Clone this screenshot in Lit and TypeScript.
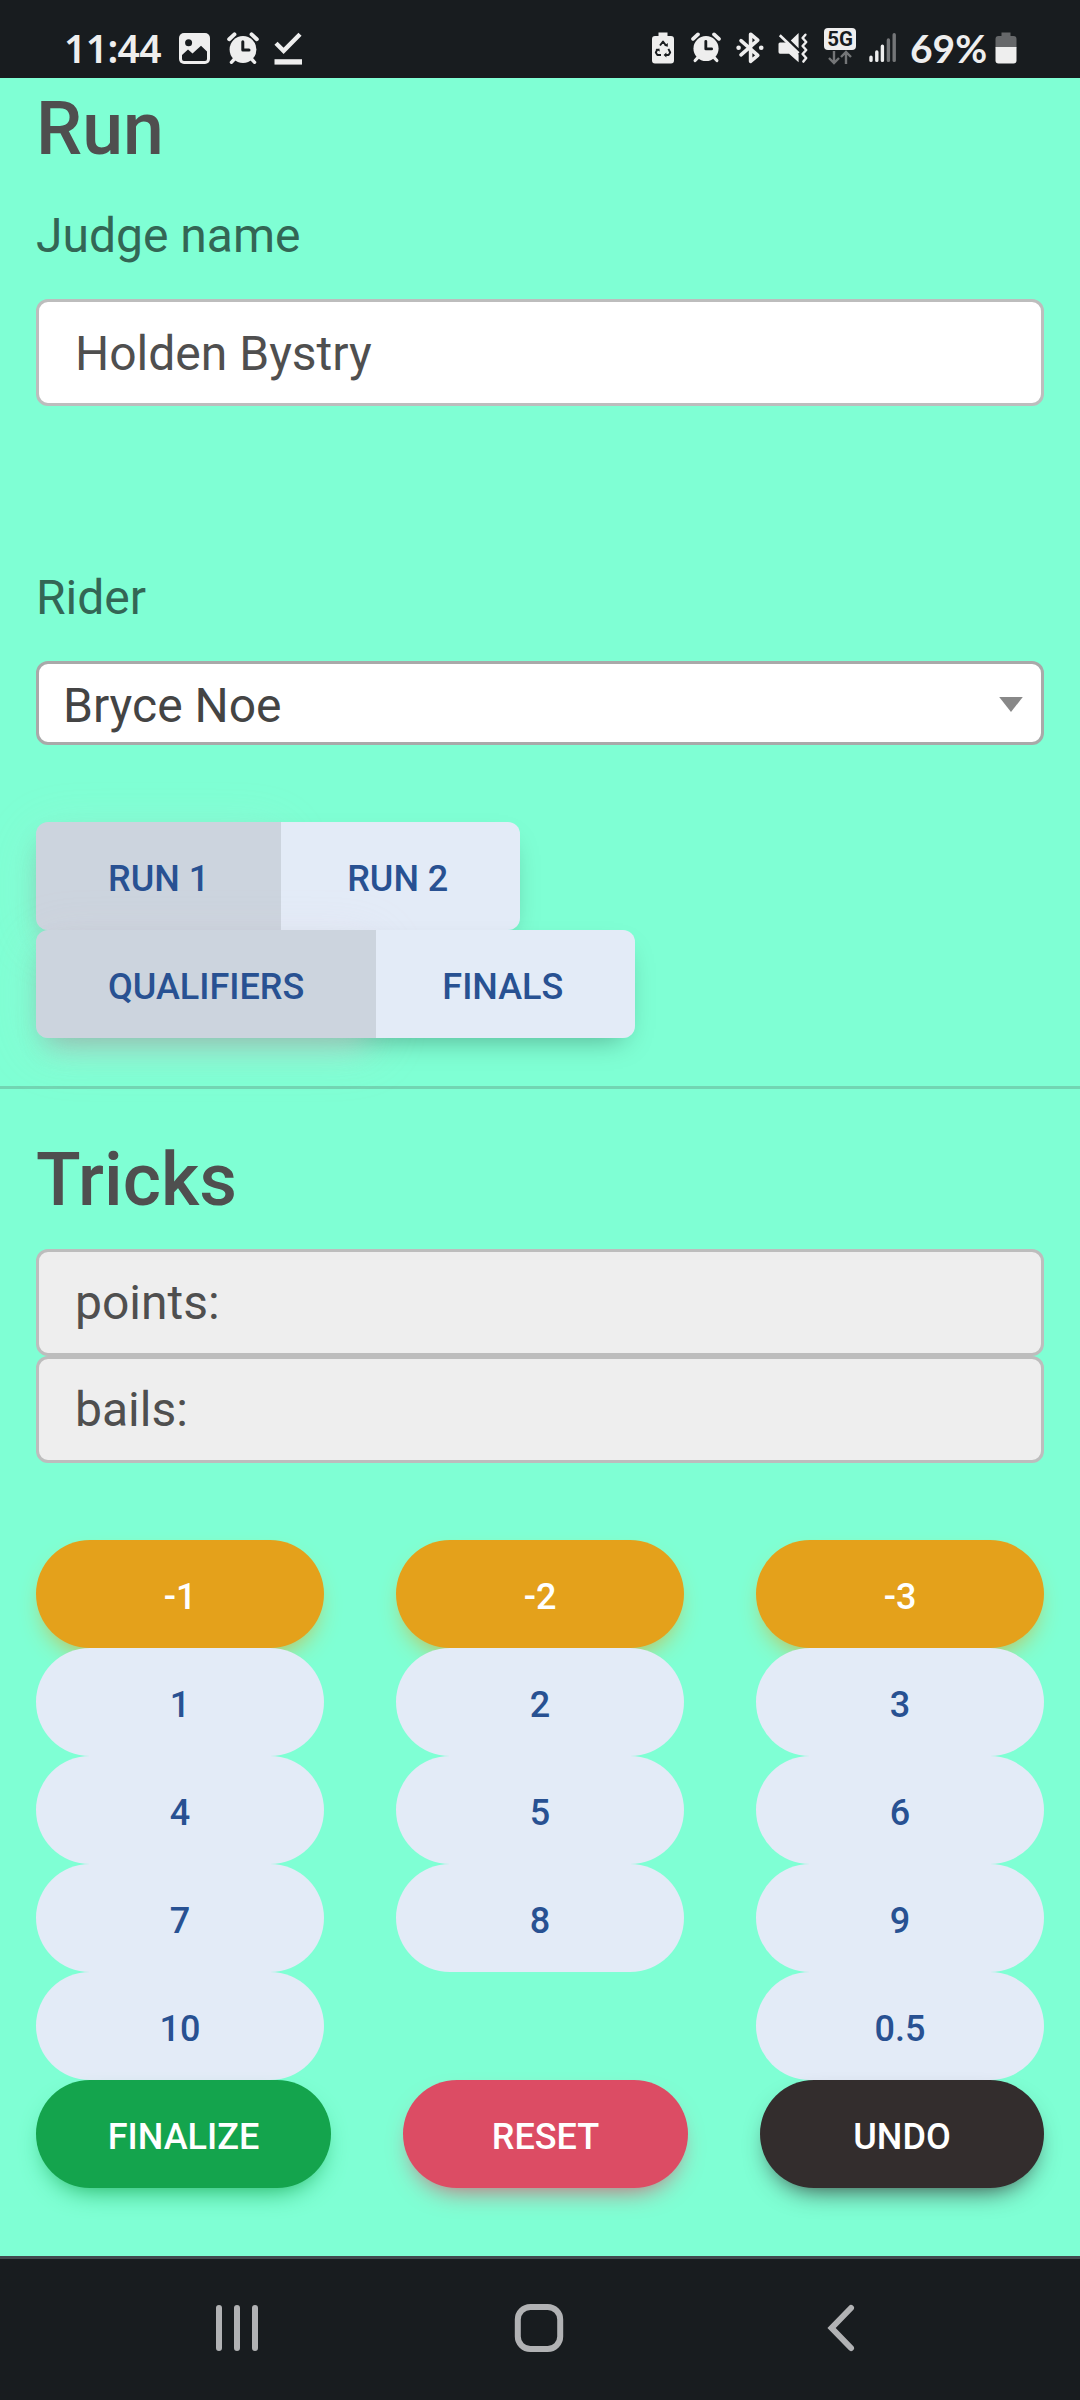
import { LitElement, html, css, svg } from "lit";
import { customElement } from "lit/decorators.js";

const alarmShape = svg`
  <circle cx="16" cy="17.5" r="13.4" fill="#eee"/>
  <path d="M2.2 7.2 7.4 2.4M29.8 7.2 24.6 2.4" stroke="#eee" stroke-width="4" stroke-linecap="round"/>
  <path d="M7 27.5 4.4 30.3M25 27.5 27.6 30.3" stroke="#eee" stroke-width="3.4" stroke-linecap="round"/>
  <path d="M15.8 9.8V17.9H22" fill="none" stroke="#181c1f" stroke-width="3" stroke-linecap="round" stroke-linejoin="round"/>`;

@customElement("status-bar")
class StatusBar extends LitElement {
  static styles = css`
    :host {
      display: flex;
      justify-content: space-between;
      height: 78px;
      padding: 0 63px 0 64px;
      box-sizing: border-box;
      background: #181c1f;
      color: #eee;
      font: 600 39px/54px "Noto Sans", "Open Sans", sans-serif;
    }
    .side {
      display: flex;
      align-items: flex-start;
      padding-top: 21px;
    }
    svg {
      display: block;
      flex: none;
      margin-top: 10px;
    }
    .clock {
      width: 98px;
      letter-spacing: -0.6px;
      white-space: nowrap;
    }
    .percent {
      width: 80px;
      font-family: Lato, sans-serif;
      font-weight: 700;
      margin-left: 12px;
      white-space: nowrap;
    }
    .image { margin-left: 17px; }
    .alarm { margin-left: 17px; }
    .done { margin-left: 15px; }
    .alarm-small { margin-left: 17px; }
    .bluetooth { margin-left: 15px; }
    .mute { margin-left: 14px; }
    .network { margin-left: 15px; margin-top: 7px; }
    .signal { margin-left: 13px; }
    .battery { margin-left: 5px; }
  `;

  render() {
    return html`
      <div class="side">
        <span class="clock">11:44</span>
        <svg class="image" width="31" height="33" viewBox="0 0 31 33">
          <rect y="2" width="31" height="31" rx="5" fill="#eee"/>
          <circle cx="9.6" cy="11.8" r="3.5" fill="#181c1f"/>
          <path d="M3 24 9 18.5 13.5 22.5 22 14.8 28 20.5V28Q28 30 26 30H5Q3 30 3 28Z" fill="#181c1f"/>
        </svg>
        <svg class="alarm" width="32" height="33" viewBox="0 -1 32 33">${alarmShape}</svg>
        <svg class="done" width="29" height="35" viewBox="0 0 29 35">
          <path d="M2 12.2 9.6 19.8 26 3.2" fill="none" stroke="#eee" stroke-width="4.4"/>
          <path d="M0.5 28.2H28V33.6H0.5Z" fill="#eee"/>
        </svg>
      </div>
      <div class="side">
        <svg width="22" height="33" viewBox="0 0 22 33">
          <path d="M6.5 1.5H15.5V5H19Q22 5 22 8V29.5Q22 32.5 19 32.5H3Q0 32.5 0 29.5V8Q0 5 3 5H6.5Z" fill="#eee"/>
          <path d="M8 14.5 11 10.6 14 14.5M16.4 17.8 18.2 21.5 16.6 24H13M9 24H5.4L3.8 21.5 5.6 17.8" fill="none" stroke="#181c1f" stroke-width="1.9" stroke-linejoin="round"/>
          <path d="M14.4 21.6V26.4L11.6 24ZM3.4 18.4 7.4 17.4 7.8 20.6ZM12.2 14.8 15.8 15.8 15.8 12Z" fill="#181c1f"/>
        </svg>
        <svg class="alarm-small" width="30" height="33" viewBox="0 -1.2 32 35.2">${alarmShape}</svg>
        <svg class="bluetooth" width="28" height="33" viewBox="0 0 28 33">
          <path d="M5 9.6 21.8 24.4 14.6 30.3V3.2L21.8 9.2 5 23.8" fill="none" stroke="#eee" stroke-width="3.6" stroke-linejoin="round" stroke-linecap="round"/>
          <circle cx="2.6" cy="16.8" r="2.3" fill="#eee"/>
          <circle cx="25.2" cy="16.8" r="2.3" fill="#eee"/>
        </svg>
        <svg class="mute" width="31" height="33" viewBox="0 0 31 33">
          <path d="M2 11.5H8.8L20.6 23.4V31.2L11 22.8H2Q0.5 22.8 0.5 21V13Q0.5 11.5 2 11.5ZM20.6 2V17.2L12.8 9.6Z" fill="#eee"/>
          <path d="M1.8 4.2 20.6 22.2" stroke="#eee" stroke-width="2.6"/>
          <path d="M27.4 3.8 24.6 7 28.2 11 24.6 15 28.2 19 24.6 23 28.2 27 25.4 30.6" fill="none" stroke="#eee" stroke-width="2.5" stroke-linejoin="round" stroke-linecap="round"/>
        </svg>
        <svg class="network" width="32" height="38" viewBox="0 0 32 38">
          <rect width="32" height="22" rx="4" fill="#eee"/>
          <text x="16" y="18.4" text-anchor="middle" font-family="Roboto, sans-serif" font-weight="700" font-size="20.5" fill="#181c1f">5G</text>
          <path d="M10 23V34M5 30 10 35 15 30M22 36V25M17 29 22 24 27 29" fill="none" stroke="#747678" stroke-width="2.4"/>
        </svg>
        <svg class="signal" width="29" height="33" viewBox="0 0 29 33">
          <path d="M2 26.2V29.4M7.8 21V29.4M13.4 15.2V29.4" stroke="#eee" stroke-width="3.4" stroke-linecap="round"/>
          <path d="M19.4 9V29.4M25.2 3.8V29.4" stroke="#747678" stroke-width="3.4" stroke-linecap="round"/>
        </svg>
        <span class="percent">69%</span>
        <svg class="battery" width="22" height="33" viewBox="0 0 22 33">
          <path d="M6.5 1.5H15.5V5H18.5Q21.5 5 21.5 8V16.5H0.5V8Q0.5 5 3.5 5H6.5Z" fill="#66686a"/>
          <path d="M0.5 16H21.5V29.5Q21.5 32.5 18.5 32.5H3.5Q0.5 32.5 0.5 29.5Z" fill="#eee"/>
        </svg>
      </div>
    `;
  }
}

@customElement("nav-bar")
class NavBar extends LitElement {
  static styles = css`
    :host {
      display: flex;
      height: 144px;
      box-sizing: border-box;
      border-top: 3px solid #414a4e;
      background: #181c1f;
      padding: 43px 0 0 214px;
      align-items: flex-start;
    }
    svg { display: block; }
    .home { margin-left: 253px; }
    .back { margin-left: 261px; }
  `;

  render() {
    return html`
      <svg width="46" height="52" viewBox="0 0 46 52" stroke="#b1b2b4" stroke-width="6" stroke-linecap="round">
        <path d="M5 6V46M23 6V46M41 6V46"/>
      </svg>
      <svg class="home" width="52" height="52" viewBox="0 0 52 52">
        <rect x="4.8" y="5" width="42.4" height="42" rx="12.5" fill="none" stroke="#b1b2b4" stroke-width="6"/>
      </svg>
      <svg class="back" width="30" height="52" viewBox="0 0 30 52">
        <path d="M25 6 5.6 26 25 46" fill="none" stroke="#b1b2b4" stroke-width="6" stroke-linecap="round"/>
      </svg>
    `;
  }
}

@customElement("app-root")
class AppRoot extends LitElement {
  static styles = css`
    :host {
      display: flex;
      flex-direction: column;
      width: 1080px;
      height: 2400px;
      background: #7fffd4;
      color: #4f4f4f;
      font: 400 48px/72px Roboto, sans-serif;
      overflow: hidden;
    }
    .content {
      flex: 1;
      padding-top: 6px;
    }
    .section {
      display: flex;
      flex-direction: column;
      padding: 0 36px;
    }
    h2 {
      margin: 0;
      font-size: 73.3px;
      line-height: 90px;
      font-weight: 500;
    }
    .label {
      color: #336655;
      margin: 26px 0 27px;
    }
    .rider { margin-top: 156px; }
    .field {
      display: flex;
      align-items: center;
      height: 107px;
      box-sizing: border-box;
      border: 3px solid #bdbdbd;
      border-radius: 12px;
      background: #fff;
      padding: 2px 36px 0;
    }
    .readonly {
      background: #eee;
      padding-top: 0;
    }
    .select {
      height: 84px;
      justify-content: space-between;
      padding: 5px 18px 0 24px;
      border-color: #a9a9a9;
      color: #444;
    }
    .toggles {
      display: flex;
      flex-direction: column;
      align-items: flex-start;
      margin: 77px 0 48px;
    }
    .group {
      display: flex;
      border-radius: 12px;
      box-shadow: 0 12px 27px -12px rgba(0, 0, 0, 0.35);
    }
    .btn {
      display: flex;
      justify-content: center;
      height: 108px;
      box-sizing: border-box;
      padding: 30px 72px 24px;
      font-size: 36px;
      line-height: 54px;
      font-weight: 500;
      white-space: nowrap;
      background: #e3ebf7;
      color: #285192;
    }
    .group .btn:first-child {
      border-radius: 12px 0 0 12px;
      background: #ccd4de;
      box-shadow: 0 24px 27px -12px rgba(227, 200, 210, 0.3), 0 12px 54px 0 rgba(227, 200, 210, 0.2);
    }
    .group .btn:last-child {
      border-radius: 0 12px 12px 0;
      padding-left: 66px;
    }
    .divider {
      height: 3px;
      background: #72d5b3;
      margin-bottom: 46px;
    }
    .tricks { margin-bottom: 24px; }
    .keypad {
      display: grid;
      grid-template-columns: repeat(3, 288px);
      column-gap: 72px;
      margin-top: 77px;
    }
    .actions {
      display: grid;
      grid-template-columns: 295px 285px 284px;
      column-gap: 72px;
    }
    .pill {
      border-radius: 54px;
      padding-left: 0;
      padding-right: 0;
    }
    .warning, .success, .danger, .dark { color: #fff; }
    .warning { background: #e4a11b; box-shadow: 0 12px 27px -12px #e4a11b; }
    .success { background: #14a44d; box-shadow: 0 12px 27px -12px #14a44d; }
    .danger { background: #dc4c64; box-shadow: 0 12px 27px -12px #dc4c64; }
    .dark { background: #332d2d; box-shadow: 0 12px 27px -12px #332d2d; }
  `;

  private keys = ["-1", "-2", "-3", "1", "2", "3", "4", "5", "6", "7", "8", "9", "10", "", "0.5"];

  render() {
    return html`
      <status-bar></status-bar>
      <div class="content">
        <div class="section">
          <h2>Run</h2>
          <div class="label">Judge name</div>
          <div class="field">Holden Bystry</div>
          <div class="label rider">Rider</div>
          <div class="field select">
            <span>Bryce Noe</span>
            <svg width="24" height="18" viewBox="0 0 24 18"><path d="M0.2 0H23.8L12 15Z" fill="#888"/></svg>
          </div>
          <div class="toggles">
            <div class="group"><div class="btn">RUN 1</div><div class="btn">RUN 2</div></div>
            <div class="group"><div class="btn">QUALIFIERS</div><div class="btn">FINALS</div></div>
          </div>
        </div>
        <div class="divider"></div>
        <div class="section">
          <h2 class="tricks">Tricks</h2>
          <div class="field readonly">points:</div>
          <div class="field readonly">bails:</div>
          <div class="keypad">
            ${this.keys.map((key) =>
              key === ""
                ? html`<div></div>`
                : html`<div class="btn pill ${key.startsWith("-") ? "warning" : ""}">${key}</div>`
            )}
          </div>
          <div class="actions">
            <div class="btn pill success">FINALIZE</div>
            <div class="btn pill danger">RESET</div>
            <div class="btn pill dark">UNDO</div>
          </div>
        </div>
      </div>
      <nav-bar></nav-bar>
    `;
  }
}
